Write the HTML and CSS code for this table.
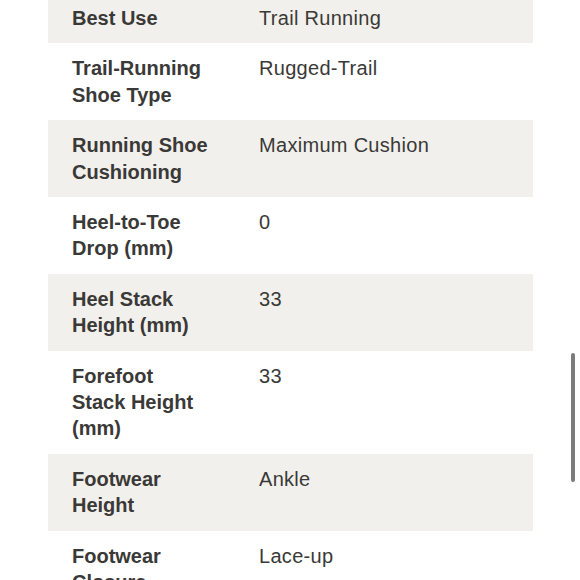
FILE: index.html
```html
<!DOCTYPE html>
<html lang="en">
<head>
<meta charset="utf-8">
<title>Specs</title>
<link rel="stylesheet" href="styles.css">
</head>
<body>
<div class="page">
  <table class="specs">
    <tbody>
      <tr class="shade"><th>Best Use</th><td>Trail Running</td></tr>
      <tr><th>Trail-Running Shoe Type</th><td>Rugged-Trail</td></tr>
      <tr class="shade"><th>Running Shoe Cushioning</th><td>Maximum Cushion</td></tr>
      <tr><th>Heel-to-Toe Drop (mm)</th><td>0</td></tr>
      <tr class="shade"><th>Heel Stack Height (mm)</th><td>33</td></tr>
      <tr><th>Forefoot Stack Height (mm)</th><td>33</td></tr>
      <tr class="shade"><th>Footwear Height</th><td>Ankle</td></tr>
      <tr><th>Footwear Closure</th><td>Lace-up</td></tr>
    </tbody>
  </table>
</div>
<div class="scroll-indicator"></div>
</body>
</html>
```
FILE: styles.css
```css
html, body {
  margin: 0;
  padding: 0;
  background: #ffffff;
  overflow: hidden;
}
body {
  font-family: "Liberation Sans", Arial, sans-serif;
  color: #3a3937;
  height: 580px;
  position: relative;
}
.page {
  padding: 0 47px 0 48px;
  margin-top: -7px;
}
.specs {
  width: 485px;
  border-collapse: collapse;
  border-spacing: 0;
  table-layout: fixed;
}
.specs tr.shade {
  background: #f2f0ec;
}
.specs th,
.specs td {
  vertical-align: top;
  font-size: 20px;
  line-height: 26.4px;
  padding: 12px 24px;
  text-align: left;
}
.specs th {
  width: 139px;
  font-weight: 700;
}
.specs td {
  font-weight: 400;
  letter-spacing: 0.3px;
}
.scroll-indicator {
  position: absolute;
  left: 571px;
  top: 353px;
  width: 4px;
  height: 129px;
  border-radius: 2px;
  background: #7c7c7c;
}
```
